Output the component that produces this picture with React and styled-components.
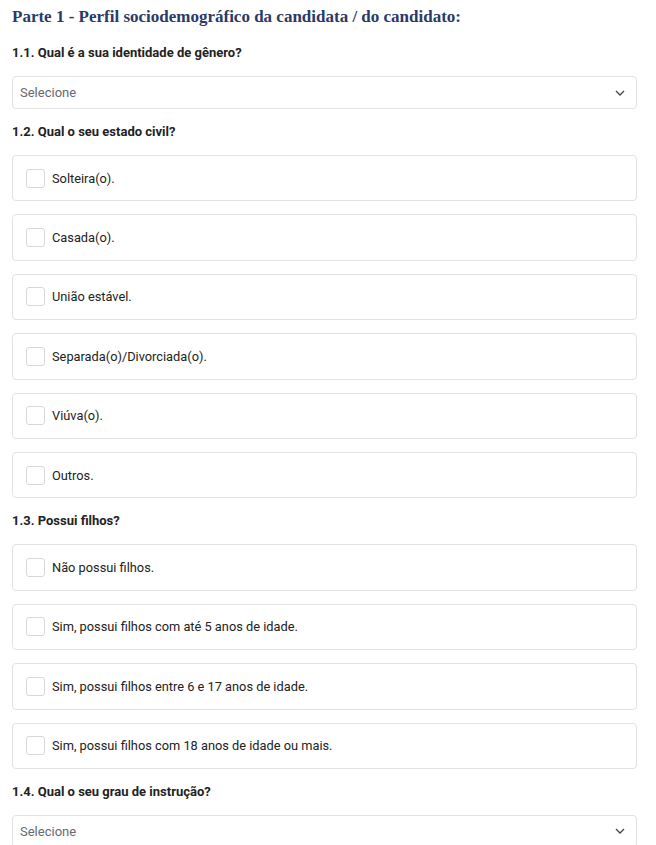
import React from 'react';
import styled, { createGlobalStyle } from 'styled-components';

const GlobalStyle = createGlobalStyle`
  body {
    margin: 0;
    background: #fff;
    font-family: Roboto, "Liberation Sans", sans-serif;
    color: #212529;
  }
`;

const Page = styled.main`
  width: 625px;
  padding: 4px 0 0 12px;
  display: flex;
  flex-direction: column;
`;

const Title = styled.h2`
  margin: 0;
  font-family: "Liberation Serif", "DejaVu Serif", serif;
  font-weight: 700;
  font-size: 17px;
  line-height: 26px;
  color: #2b3a67;
`;

const Question = styled.h3`
  margin: 14px 0 14px;
  font-size: 13px;
  font-weight: 700;
  line-height: 18px;
  color: #222;
`;

const SelectBox = styled.div`
  height: 33px;
  box-sizing: border-box;
  border: 1px solid #e2e2e6;
  border-radius: 4px;
  display: flex;
  align-items: center;
  justify-content: space-between;
  padding: 0 11px 0 7px;
  font-size: 13px;
  color: #666a73;
`;

const Options = styled.div`
  display: flex;
  flex-direction: column;
  gap: 13px;
`;

const OptionCard = styled.label`
  height: 46.4px;
  box-sizing: border-box;
  border: 1px solid #e2e2e6;
  border-radius: 4px;
  display: flex;
  align-items: center;
  gap: 7px;
  padding-left: 13px;
  font-size: 12.8px;
  color: #222;
`;

const Box = styled.span`
  width: 17px;
  height: 17px;
  border: 1px solid #d8d8dc;
  border-radius: 3px;
  background: #fff;
  flex-shrink: 0;
`;

const Chevron = () => (
  <svg width="10" height="6" viewBox="0 0 10 6" fill="none">
    <polyline points="1,1 5,5 9,1" stroke="#444" strokeWidth="1.3" />
  </svg>
);

const Select = () => (
  <SelectBox>
    <span>Selecione</span>
    <Chevron />
  </SelectBox>
);

const Option = ({ children }) => (
  <OptionCard>
    <Box />
    <span>{children}</span>
  </OptionCard>
);

const estadoCivil = [
  'Solteira(o).',
  'Casada(o).',
  'União estável.',
  'Separada(o)/Divorciada(o).',
  'Viúva(o).',
  'Outros.',
];

const filhos = [
  'Não possui filhos.',
  'Sim, possui filhos com até 5 anos de idade.',
  'Sim, possui filhos entre 6 e 17 anos de idade.',
  'Sim, possui filhos com 18 anos de idade ou mais.',
];

export default function App() {
  return (
    <>
      <GlobalStyle />
      <Page>
        <Title>Parte 1 - Perfil sociodemográfico da candidata / do candidato:</Title>
        <Question>1.1. Qual é a sua identidade de gênero?</Question>
        <Select />
        <Question>1.2. Qual o seu estado civil?</Question>
        <Options>
          {estadoCivil.map((o) => (
            <Option key={o}>{o}</Option>
          ))}
        </Options>
        <Question>1.3. Possui filhos?</Question>
        <Options>
          {filhos.map((o) => (
            <Option key={o}>{o}</Option>
          ))}
        </Options>
        <Question>1.4. Qual o seu grau de instrução?</Question>
        <Select />
      </Page>
    </>
  );
}
